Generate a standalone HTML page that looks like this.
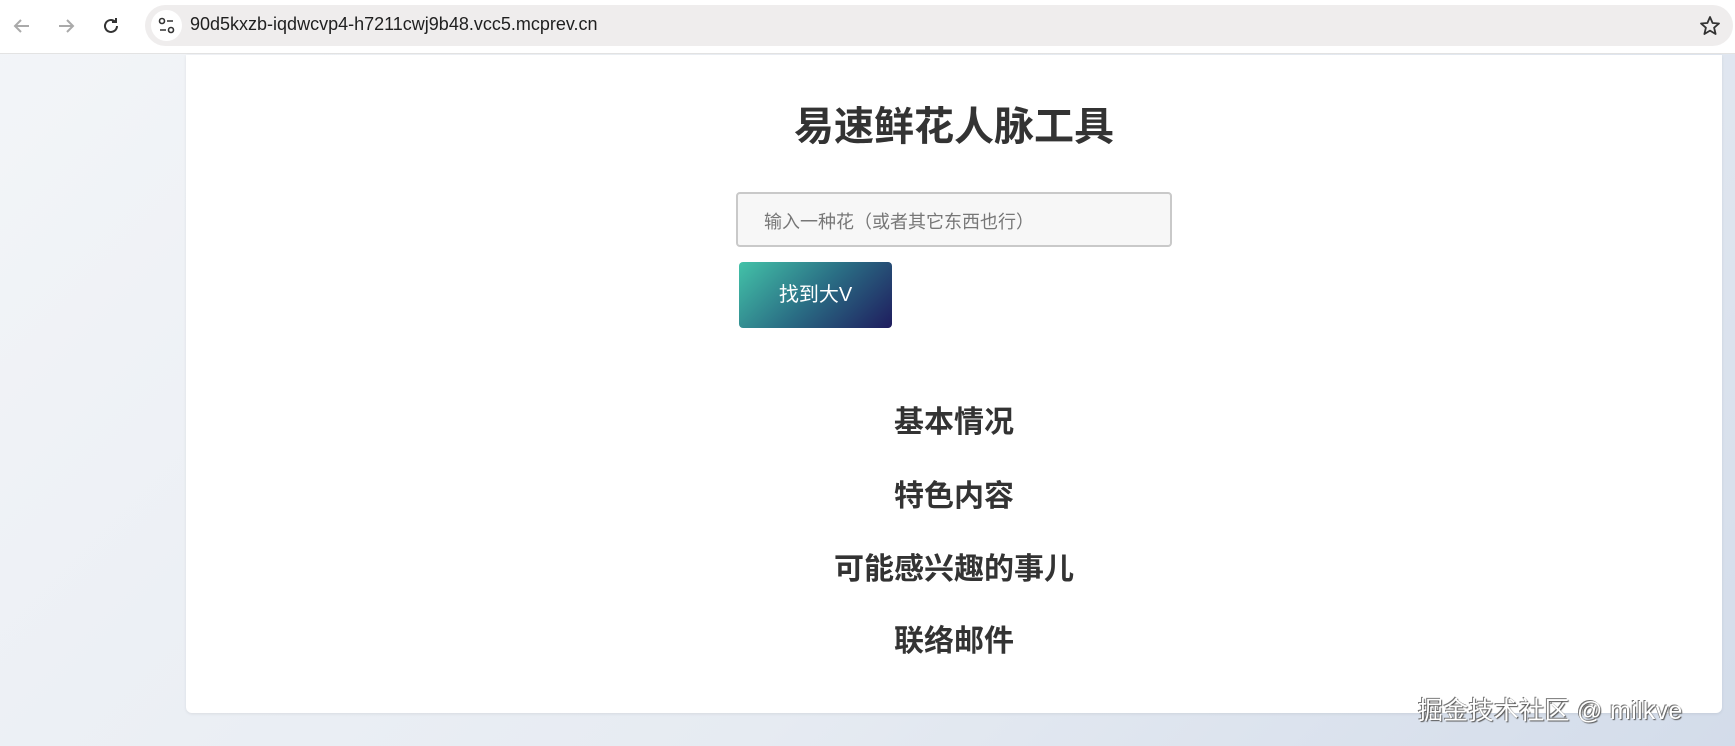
<!DOCTYPE html>
<html><head><meta charset="utf-8"><style>
*{margin:0;padding:0;box-sizing:border-box}
body{width:1735px;height:746px;overflow:hidden;font-family:"Liberation Sans","Noto Sans CJK SC",sans-serif;background:linear-gradient(135deg,#f3f5f8 0%,#e6ebf2 60%,#d3dcea 100%);position:relative}
.bar{position:absolute;left:0;top:0;width:1735px;height:54px;background:#fff;border-bottom:1px solid #e3e3e3}
.url{position:absolute;left:145px;top:5px;width:1588px;height:41px;border-radius:21px;background:#efeded}
.url .ic{position:absolute;left:6px;top:5px;width:31px;height:31px;border-radius:50%;background:#fff}
.url span{position:absolute;left:45px;top:9px;font-size:18px;color:#1f1f1f}
.card{position:absolute;left:186px;top:55px;width:1536px;height:658px;background:#fff;border-radius:0 0 6px 6px;box-shadow:0 1px 3px rgba(0,0,0,.08)}
.title{position:absolute;left:186px;width:1536px;top:101px;text-align:center;font-size:40px;font-weight:bold;color:#333;line-height:52px}
.inp{position:absolute;left:736px;top:192px;width:436px;height:55px;border:2px solid #c9c9c9;border-radius:4px;background:#f7f7f7;font-size:18px;color:#777;padding:14px 0 0 26px}
.btn{position:absolute;left:739px;top:262px;width:153px;height:66px;border-radius:4px;background:linear-gradient(135deg,#43c2a8 0%,#2a6d84 50%,#1f1c5e 100%);color:#fff;font-size:20px;text-align:center;line-height:66px}
.h{position:absolute;left:186px;width:1536px;text-align:center;font-size:30px;font-weight:bold;color:#333;line-height:36px}
.wm{position:absolute;left:1418px;top:691px;font-size:25px;color:#fff;text-shadow:1px 1px 1px #555,-1px -1px 0 #777;letter-spacing:0.3px}
</style></head><body>
<div class="bar">
<svg style="position:absolute;left:10px;top:14px" width="24" height="24" viewBox="0 0 24 24"><path d="M19 12H5M11 6l-6 6 6 6" stroke="#aaa" stroke-width="2" fill="none"/></svg>
<svg style="position:absolute;left:54px;top:14px" width="24" height="24" viewBox="0 0 24 24"><path d="M5 12h14M13 6l6 6-6 6" stroke="#aaa" stroke-width="2" fill="none"/></svg>
<svg style="position:absolute;left:99px;top:14px" width="24" height="24" viewBox="0 0 24 24"><path d="M18 12a6 6 0 1 1-2-4.5M17 4v4h-4" stroke="#333" stroke-width="2" fill="none"/></svg>
<div class="url"><div class="ic"><svg width="31" height="31" viewBox="0 0 31 31"><circle cx="11" cy="11" r="2.5" stroke="#333" stroke-width="1.6" fill="none"/><path d="M16 11h6M9 20h6" stroke="#333" stroke-width="1.6"/><circle cx="20" cy="20" r="2.5" stroke="#333" stroke-width="1.6" fill="none"/></svg></div><span>90d5kxzb-iqdwcvp4-h7211cwj9b48.vcc5.mcprev.cn</span>
<svg style="position:absolute;left:1553px;top:9px" width="24" height="24" viewBox="0 0 24 24"><path d="M12 3l2.6 6 6.4.5-4.9 4.2 1.5 6.3L12 16.6 6.4 20l1.5-6.3L3 9.5 9.4 9z" stroke="#333" stroke-width="1.8" fill="none" stroke-linejoin="round"/></svg></div>
</div>
<div class="card"></div>
<div class="title">易速鲜花人脉工具</div>
<div class="inp">输入一种花（或者其它东西也行）</div>
<div class="btn">找到大V</div>
<div class="h" style="top:405px">基本情况</div>
<div class="h" style="top:479px">特色内容</div>
<div class="h" style="top:552px">可能感兴趣的事儿</div>
<div class="h" style="top:624px">联络邮件</div>
<div class="wm">掘金技术社区 @ milkve</div>
</body></html>
